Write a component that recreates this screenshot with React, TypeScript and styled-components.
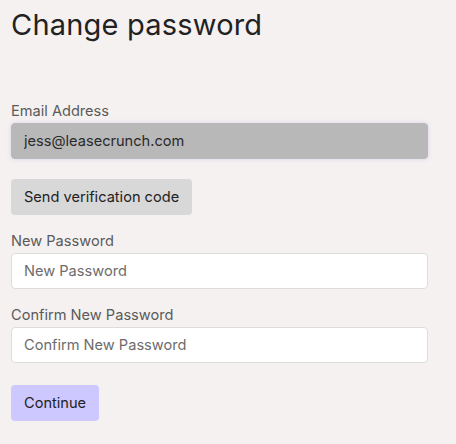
import React from "react";
import styled, { createGlobalStyle } from "styled-components";

const GlobalStyle = createGlobalStyle`
  html, body {
    margin: 0;
    padding: 0;
    background: #f5f1f1;
  }
  body {
    font-family: Inter, "Noto Sans", "Liberation Sans", sans-serif;
    color: #212529;
  }
`;

const Page = styled.div`
  width: 456px;
  height: 444px;
  box-sizing: border-box;
  padding: 6px 28px 0 11px;
  background: #f5f1f1;
`;

const Title = styled.h1`
  font-size: 29px;
  font-weight: 400;
  margin: 0 0 58px 0;
  line-height: 38px;
  color: #222;
  letter-spacing: 0.2px;
`;

const Form = styled.form`
  display: flex;
  flex-direction: column;
`;

const Field = styled.div`
  display: flex;
  flex-direction: column;
  gap: 2px;
  margin-bottom: 17px;
`;

const Label = styled.label`
  font-size: 14.6px;
  line-height: 19px;
  color: #5a5a5a;
`;

const Input = styled.input<{ $readOnly?: boolean }>`
  height: 36px;
  box-sizing: border-box;
  padding: 0 12px;
  font-family: inherit;
  font-size: 14.6px;
  color: #2a2a2a;
  border-radius: 4px;
  border: 1px solid ${(p) => (p.$readOnly ? "#b9b8b9" : "#dcdcdc")};
  background: ${(p) => (p.$readOnly ? "#b9b8b9" : "#ffffff")};
  box-shadow: ${(p) =>
    p.$readOnly ? "0 0 4px rgba(160, 150, 230, 0.35)" : "none"};
  outline: none;
  &::placeholder {
    color: #6c6c6c;
  }
`;

const Button = styled.button<{ $tone: "grey" | "primary" }>`
  align-self: flex-start;
  height: 36px;
  margin-top: ${(p) => (p.$tone === "primary" ? "5px" : "3px")};
  padding: 0 13px;
  border: 0;
  border-radius: 4px;
  font-family: inherit;
  font-size: 14.6px;
  color: #222;
  background: ${(p) => (p.$tone === "primary" ? "#cdc8ff" : "#d9d8d8")};
  cursor: pointer;
`;

const SendButton = styled(Button)`
  margin-bottom: 17px;
`;

export default function App() {
  return (
    <>
      <GlobalStyle />
      <Page>
        <Title>Change password</Title>
        <Form onSubmit={(e) => e.preventDefault()}>
          <Field>
            <Label htmlFor="email">Email Address</Label>
            <Input id="email" $readOnly readOnly value="jess@leasecrunch.com" />
          </Field>
          <SendButton type="button" $tone="grey">
            Send verification code
          </SendButton>
          <Field>
            <Label htmlFor="newPassword">New Password</Label>
            <Input id="newPassword" type="password" placeholder="New Password" />
          </Field>
          <Field>
            <Label htmlFor="confirmPassword">Confirm New Password</Label>
            <Input
              id="confirmPassword"
              type="password"
              placeholder="Confirm New Password"
            />
          </Field>
          <Button type="submit" $tone="primary">
            Continue
          </Button>
        </Form>
      </Page>
    </>
  );
}
